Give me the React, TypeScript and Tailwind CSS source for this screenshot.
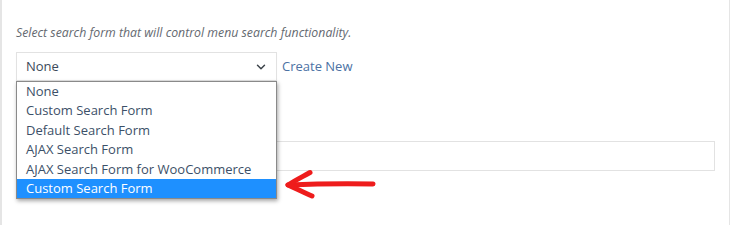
import { ChevronDown } from 'lucide-react';

const options = [
  'None',
  'Custom Search Form',
  'Default Search Form',
  'AJAX Search Form',
  'AJAX Search Form for WooCommerce',
  'Custom Search Form',
];

export default function App() {
  return (
    <div
      className="relative h-[225px] w-[730px] overflow-hidden bg-white border-l-2 border-r border-[#e5e5e5] text-[#3c434a]"
      style={{ fontFamily: '"Open Sans", "Noto Sans", sans-serif' }}
    >
      <div className="flex flex-col pl-[14px] pr-[14px] pt-[24px]">
        <p className="text-[12.3px] italic leading-[18px] text-[#646970]">
          Select search form that will control menu search functionality.
        </p>

        <div className="relative mt-[10px] flex items-center gap-[5px]">
          <div className="flex h-[29px] w-[261px] items-center justify-between border border-[#e2e2e2] bg-white pl-[9px] pr-[8px] shadow-[0_1px_1px_rgba(0,0,0,0.04)]">
            <span className="text-[13px] text-[#3c4a5a]">None</span>
            <ChevronDown className="h-[14px] w-[14px] text-[#3c434a]" strokeWidth={2.5} />
          </div>
          <a className="text-[13px] text-[#4c72a4]">Create New</a>

          <ul className="absolute left-0 top-[29px] z-10 w-[261px] border border-[#8a8a8a] bg-white shadow-[1px_2px_4px_rgba(0,0,0,0.35)]">
            {options.map((label, i) => (
              <li
                key={i}
                className={`h-[19.4px] pl-[9px] text-[13px] leading-[19px] ${
                  i === options.length - 1 ? 'bg-[#1e90ff] text-white' : 'text-[#3c5068]'
                }`}
              >
                {label}
              </li>
            ))}
          </ul>
        </div>

        <div className="mt-[36px] h-[18px]" />
        <div className="mt-[6px] h-[30px] w-[699px] border border-[#e2e2e2] bg-white" />
      </div>

      <svg
        className="absolute left-[280px] top-[168px]"
        width="100"
        height="34"
        viewBox="0 0 100 34"
        fill="none"
      >
        <path
          d="M6 17 C 30 16, 60 15.5, 91 16"
          stroke="#ee1c1c"
          strokeWidth="5"
          strokeLinecap="round"
        />
        <path
          d="M28 4.5 C 20 9, 12 13, 6 17 C 13 20, 21 24, 30 28"
          stroke="#ee1c1c"
          strokeWidth="5"
          strokeLinecap="round"
          strokeLinejoin="round"
        />
      </svg>
    </div>
  );
}
